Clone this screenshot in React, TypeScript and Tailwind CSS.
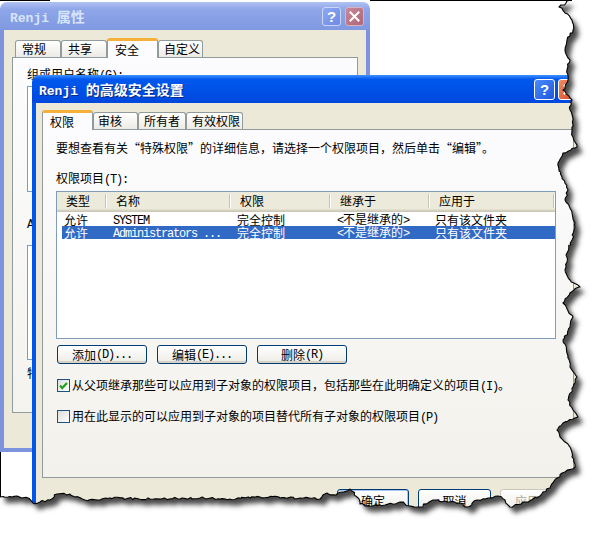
import React from "react";

const MONO = "font-['Liberation_Mono',monospace] text-[12px] leading-none tracking-[-1.2px] whitespace-pre";
const TITLE_MONO = "font-['Liberation_Mono',monospace] text-[13px] leading-none whitespace-pre";

function T({ s, mono = MONO }: { s: string; mono?: string }) {
  const parts = s.split(/([\x20-\x7E]+)/);
  return (
    <>
      {parts.map((p, i) =>
        p === "" ? null : i % 2 === 1 ? (
          <span key={i} className={mono}>
            {p}
          </span>
        ) : (
          <span key={i}>{p}</span>
        )
      )}
    </>
  );
}

const EDGE: number[][] = [
  [572, 0], [566, 3], [559, 7], [565, 13], [572, 20], [573, 30], [567, 40], [565, 50], [570, 60], [567, 70],
  [568, 80], [563, 90], [572, 100], [570, 110], [573, 120], [572, 130], [573, 137], [577, 147], [563, 153],
  [558, 163], [562, 177], [568, 190], [565, 200], [572, 213], [575, 227], [572, 240], [567, 253], [567, 262],
  [565, 270], [570, 280], [580, 287], [570, 293], [563, 303], [573, 317], [570, 327], [563, 340], [567, 353],
  [570, 367], [577, 377], [573, 387], [568, 400], [573, 410], [578, 417], [563, 423], [557, 430], [560, 437],
  [570, 447], [572, 457], [575, 467], [565, 472], [557, 478], [550, 488], [540, 496], [525, 502], [510, 507],
  [505, 500], [498, 496], [485, 499], [477, 500], [467, 507], [460, 503], [445, 501], [433, 500], [420, 507],
  [410, 506], [400, 502], [385, 505], [370, 506], [360, 504], [357, 497], [350, 489], [342, 492], [336, 495],
  [327, 493], [320, 499], [300, 498], [260, 497], [230, 499], [200, 498], [150, 499], [110, 498], [100, 500],
  [85, 500], [70, 494], [57, 494], [50, 500], [40, 502], [33, 503], [28, 498], [17, 496], [8, 497], [0, 497],
];

function roughen(pts: number[][], seed: number) {
  let s = seed;
  const rnd = () => {
    s = (s * 16807) % 2147483647;
    return s / 2147483647;
  };
  const out: number[][] = [];
  for (let i = 0; i < pts.length - 1; i++) {
    const [x0, y0] = pts[i];
    const [x1, y1] = pts[i + 1];
    const n = Math.max(1, Math.round(Math.hypot(x1 - x0, y1 - y0) / 2.5));
    for (let k = 0; k < n; k++) {
      const t = k / n;
      const j = k === 0 ? 0 : 1;
      out.push([
        x0 + (x1 - x0) * t + j * (rnd() - 0.5) * 2.2,
        y0 + (y1 - y0) * t + j * (rnd() - 0.5) * 2.2,
      ]);
    }
  }
  out.push(pts[pts.length - 1]);
  return out;
}

const ROUGH = roughen(EDGE, 12345);
const EDGE_D = ROUGH.map((p, i) => `${i === 0 ? "M" : "L"}${p[0].toFixed(1)} ${p[1].toFixed(1)}`).join(" ");
const CLIP_D = `M0 0 ${EDGE_D.replace(/^M/, "L")} L0 497 Z`;

function HelpBtn({ active }: { active: boolean }) {
  return (
    <div
      className={
        active
          ? "w-[21px] h-[21px] rounded-[3px] border border-white bg-linear-to-br from-[#4B8BFA] to-[#1F55DE] flex items-center justify-center"
          : "w-[19px] h-[19px] rounded-[3px] border border-[#C9D6F7] bg-linear-to-br from-[#8FA8F0] to-[#6C8AE6] flex items-center justify-center"
      }
    >
      <span className="font-['Liberation_Sans',sans-serif] font-bold text-[15px] leading-[15px] text-white">?</span>
    </div>
  );
}

function CloseBtn({ active }: { active: boolean }) {
  return (
    <div
      className={
        active
          ? "w-[21px] h-[21px] rounded-[3px] border border-white bg-linear-to-br from-[#F08A60] to-[#D5431E] flex items-center justify-center"
          : "w-[19px] h-[19px] rounded-[3px] border border-[#D9B4BF] bg-linear-to-br from-[#C8899A] to-[#AE6677] flex items-center justify-center"
      }
    >
      <svg width="11" height="11" viewBox="0 0 11 11">
        <path d="M1.5 1.5 L9.5 9.5 M9.5 1.5 L1.5 9.5" stroke="white" strokeWidth="2" strokeLinecap="square" />
      </svg>
    </div>
  );
}

function Tab({ label, sel, className }: { label: string; sel?: boolean; className: string }) {
  return sel ? (
    <div
      className={`relative z-10 -mb-px h-[20px] rounded-t-[3px] border-x border-[#919B9C] border-t-[3px] border-t-[#F5B03A] bg-[#FCFCFE] flex items-center ${className}`}
    >
      {label}
    </div>
  ) : (
    <div
      className={`h-[17px] rounded-t-[3px] border-x border-t border-[#919B9C] bg-linear-to-b from-white to-[#ECEBE6] flex items-center ${className}`}
    >
      {label}
    </div>
  );
}

function XPButton({ label, className, disabled }: { label: string; className: string; disabled?: boolean }) {
  return (
    <div
      className={`flex items-center justify-center rounded-[3px] border bg-linear-to-b from-white to-[#ECEBE5] shadow-[inset_0_-2px_0_#D8D2C6] whitespace-nowrap ${
        disabled ? "border-[#C9C7BA] text-[#ACA899]" : "border-[#003C74] text-black"
      } ${className}`}
    >
      <T s={label} />
    </div>
  );
}

function HeadCell({ label, className }: { label: string; className: string }) {
  return (
    <div className={`h-full flex items-center pb-[2px] ${className}`}>
      <span className="flex-1 pl-[9px] whitespace-nowrap">{label}</span>
      <div className="w-[2px] h-[14px] bg-[#C7C5B2] border-r border-r-white" />
    </div>
  );
}

function Row({ cells, sel }: { cells: string[]; sel?: boolean }) {
  const widths = ["w-[45px] pl-[2px]", "w-[124px] pl-[6px]", "w-[100px] pl-[6px]", "w-[99px] pl-[6px]", "flex-1 pl-[5px]"];
  return (
    <div className={`ml-[5px] w-[493px] h-[13px] flex items-center leading-[13px] ${sel ? "bg-[#316AC5] text-white" : "text-black"}`}>
      {cells.map((c, i) => (
        <div key={i} className={`whitespace-nowrap ${widths[i]}`}>
          <T s={c} />
        </div>
      ))}
    </div>
  );
}

function Check({ checked }: { checked?: boolean }) {
  return (
    <div className="w-[13px] h-[13px] shrink-0 border border-[#1C5180] bg-linear-to-br from-[#DCDCD7] to-white">
      {checked && (
        <svg width="11" height="11" viewBox="0 0 11 11">
          <path d="M2 5.5 L4.2 8 L9 3" stroke="#21A121" strokeWidth="2.2" fill="none" />
        </svg>
      )}
    </div>
  );
}

function BackWindow() {
  return (
    <div className="absolute left-0 top-[2px] w-[370px] h-[450px] flex flex-col">
      <div className="h-[28px] shrink-0 rounded-t-[7px] bg-linear-to-b from-[#B1C2F2] via-[#8FA7E9] via-25% to-[#7F98E0] flex items-center pl-[10px] pr-[6px]">
        <span className="font-bold text-[14px] leading-[16px] text-[#D8E4F8]">
          <T s="Renji 属性" mono={TITLE_MONO} />
        </span>
        <div className="ml-auto flex gap-[4px]">
          <HelpBtn active={false} />
          <CloseBtn active={false} />
        </div>
      </div>
      <div className="flex-1 flex flex-col bg-[#ECE9D8] border-x-[4px] border-b-[4px] border-[#7D93DE] px-[8px] pt-[8px]">
        <div className="flex items-end h-[19px] pl-[3px]">
          <Tab label="常规" className="w-[46px] pl-[6px]" />
          <Tab label="共享" className="w-[46px] pl-[6px]" />
          <Tab label="安全" sel className="w-[51px] pl-[7px]" />
          <Tab label="自定义" className="w-[45px] pl-[5px]" />
        </div>
        <div className="h-[356px] border border-[#919B9C] bg-linear-to-b from-[#FCFCFE] to-[#F4F3EE] pl-[14px] pt-[9px] flex flex-col items-start">
          <div className="leading-[14px] whitespace-nowrap">
            <T s="组或用户名称(G):" />
          </div>
          <div className="mt-[4px] w-[318px] h-[106px] border border-[#7F9DB9] bg-white" />
          <div className="mt-[24px] leading-[14px] whitespace-nowrap">
            <T s="Administrators 的权限(P)" />
          </div>
          <div className="mt-[14px] w-[318px] h-[115px] border border-[#7F9DB9] bg-white" />
          <div className="mt-[6px] leading-[14px] whitespace-nowrap">特别权限或高级设置，请单击“高级”。</div>
        </div>
      </div>
    </div>
  );
}

function FrontWindow() {
  return (
    <div className="absolute left-[32px] top-[75px] w-[552px] h-[460px] flex flex-col">
      <div className="h-[28px] shrink-0 rounded-t-[7px] bg-linear-to-b from-[#3D91FF] via-[#0058EE] via-15% to-[#0048DE] flex items-center pl-[7px] pr-[5px]">
        <span className="font-bold text-[14px] leading-[16px] text-white [text-shadow:1px_1px_0_#0A2A8A]">
          <T s="Renji 的高级安全设置" mono={TITLE_MONO} />
        </span>
        <div className="ml-auto flex gap-[3px]">
          <HelpBtn active />
          <CloseBtn active />
        </div>
      </div>
      <div className="flex-1 flex flex-col bg-[#ECE9D8] border-x-[4px] border-[#0055EA] px-[6px] pt-[7px]">
        <div className="flex items-end h-[19px]">
          <Tab label="权限" sel className="w-[51px] pl-[7px]" />
          <Tab label="审核" className="w-[45px] pl-[4px]" />
          <Tab label="所有者" className="w-[48px] pl-[5px]" />
          <Tab label="有效权限" className="w-[57px] pl-[5px]" />
        </div>
        <div className="h-[349px] shrink-0 border border-[#919B9C] bg-linear-to-b from-[#FCFCFE] to-[#F2F1EB] pl-[13px] pt-[11px] flex flex-col items-start">
          <div className="leading-[14px] whitespace-nowrap">
            要想查看有关“特殊权限”的详细信息，请选择一个权限项目，然后单击“编辑”。
          </div>
          <div className="mt-[16px] leading-[14px] whitespace-nowrap">
            <T s="权限项目(T):" />
          </div>
          <div className="mt-[5px] w-[500px] h-[148px] shrink-0 border border-[#7F9DB9] bg-white">
            <div className="flex h-[20px] bg-[#EBEADB] shadow-[inset_0_-1px_0_#CBC7B8,inset_0_-2px_0_#D6D2C2,inset_0_-3px_0_#E2DECD]">
              <HeadCell label="类型" className="w-[50px]" />
              <HeadCell label="名称" className="w-[124px]" />
              <HeadCell label="权限" className="w-[100px]" />
              <HeadCell label="继承于" className="w-[99px]" />
              <HeadCell label="应用于" className="w-[125px]" />
            </div>
            <div className="pt-[1px]">
              <Row cells={["允许", "SYSTEM", "完全控制", "<不是继承的>", "只有该文件夹"]} />
              <Row sel cells={["允许", "Administrators ...", "完全控制", "<不是继承的>", "只有该文件夹"]} />
            </div>
          </div>
          <div className="mt-[6px] ml-[1px] flex gap-[10px]">
            <XPButton label="添加(D)..." className="w-[90px] h-[19px]" />
            <XPButton label="编辑(E)..." className="w-[90px] h-[19px]" />
            <XPButton label="删除(R)" className="w-[90px] h-[19px]" />
          </div>
          <div className="mt-[15px] ml-[1px] flex items-center gap-[2px] h-[13px]">
            <Check checked />
            <span className="whitespace-nowrap leading-[14px]">
              <T s="从父项继承那些可以应用到子对象的权限项目，包括那些在此明确定义的项目(I)。" />
            </span>
          </div>
          <div className="mt-[18px] ml-[1px] flex items-center gap-[2px] h-[13px]">
            <Check />
            <span className="whitespace-nowrap leading-[14px]">
              <T s="用在此显示的可以应用到子对象的项目替代所有子对象的权限项目(P)" />
            </span>
          </div>
        </div>
        <div className="flex justify-end gap-[9px] pt-[11px] pr-[2px]">
          <XPButton label="确定" className="w-[72px] h-[23px] shadow-[inset_0_0_0_1px_#A9C6F3]" />
          <XPButton label="取消" className="w-[73px] h-[23px]" />
          <XPButton label="应用(A)" disabled className="w-[72px] h-[23px]" />
        </div>
      </div>
    </div>
  );
}

export default function App() {
  return (
    <div className="relative w-[602px] h-[534px] overflow-hidden bg-white font-['Noto_Sans_CJK_SC',sans-serif] text-[12px] leading-[14px] text-black">
      <svg className="absolute inset-0 pointer-events-none" width="602" height="534" viewBox="0 0 602 534">
        <defs>
          <clipPath id="tear" clipPathUnits="userSpaceOnUse">
            <path d={CLIP_D} />
          </clipPath>
          <filter id="shadowBlur" x="-10%" y="-10%" width="120%" height="120%">
            <feGaussianBlur stdDeviation="2.6" />
          </filter>
        </defs>
        <path d={CLIP_D} fill="#4a4a4a" filter="url(#shadowBlur)" transform="translate(5 6)" />
      </svg>
      <div className="absolute inset-0 bg-white [clip-path:url(#tear)]">
        <BackWindow />
        <FrontWindow />
      </div>
      <svg className="absolute inset-0 pointer-events-none" width="602" height="534" viewBox="0 0 602 534">
        <path d={EDGE_D} fill="none" stroke="#000" strokeWidth="1.1" strokeLinejoin="round" />
        <path d="M0 0.5 H50 M370 0.5 H572 M0.5 452 V497" stroke="#000" strokeWidth="1" fill="none" />
      </svg>
    </div>
  );
}
